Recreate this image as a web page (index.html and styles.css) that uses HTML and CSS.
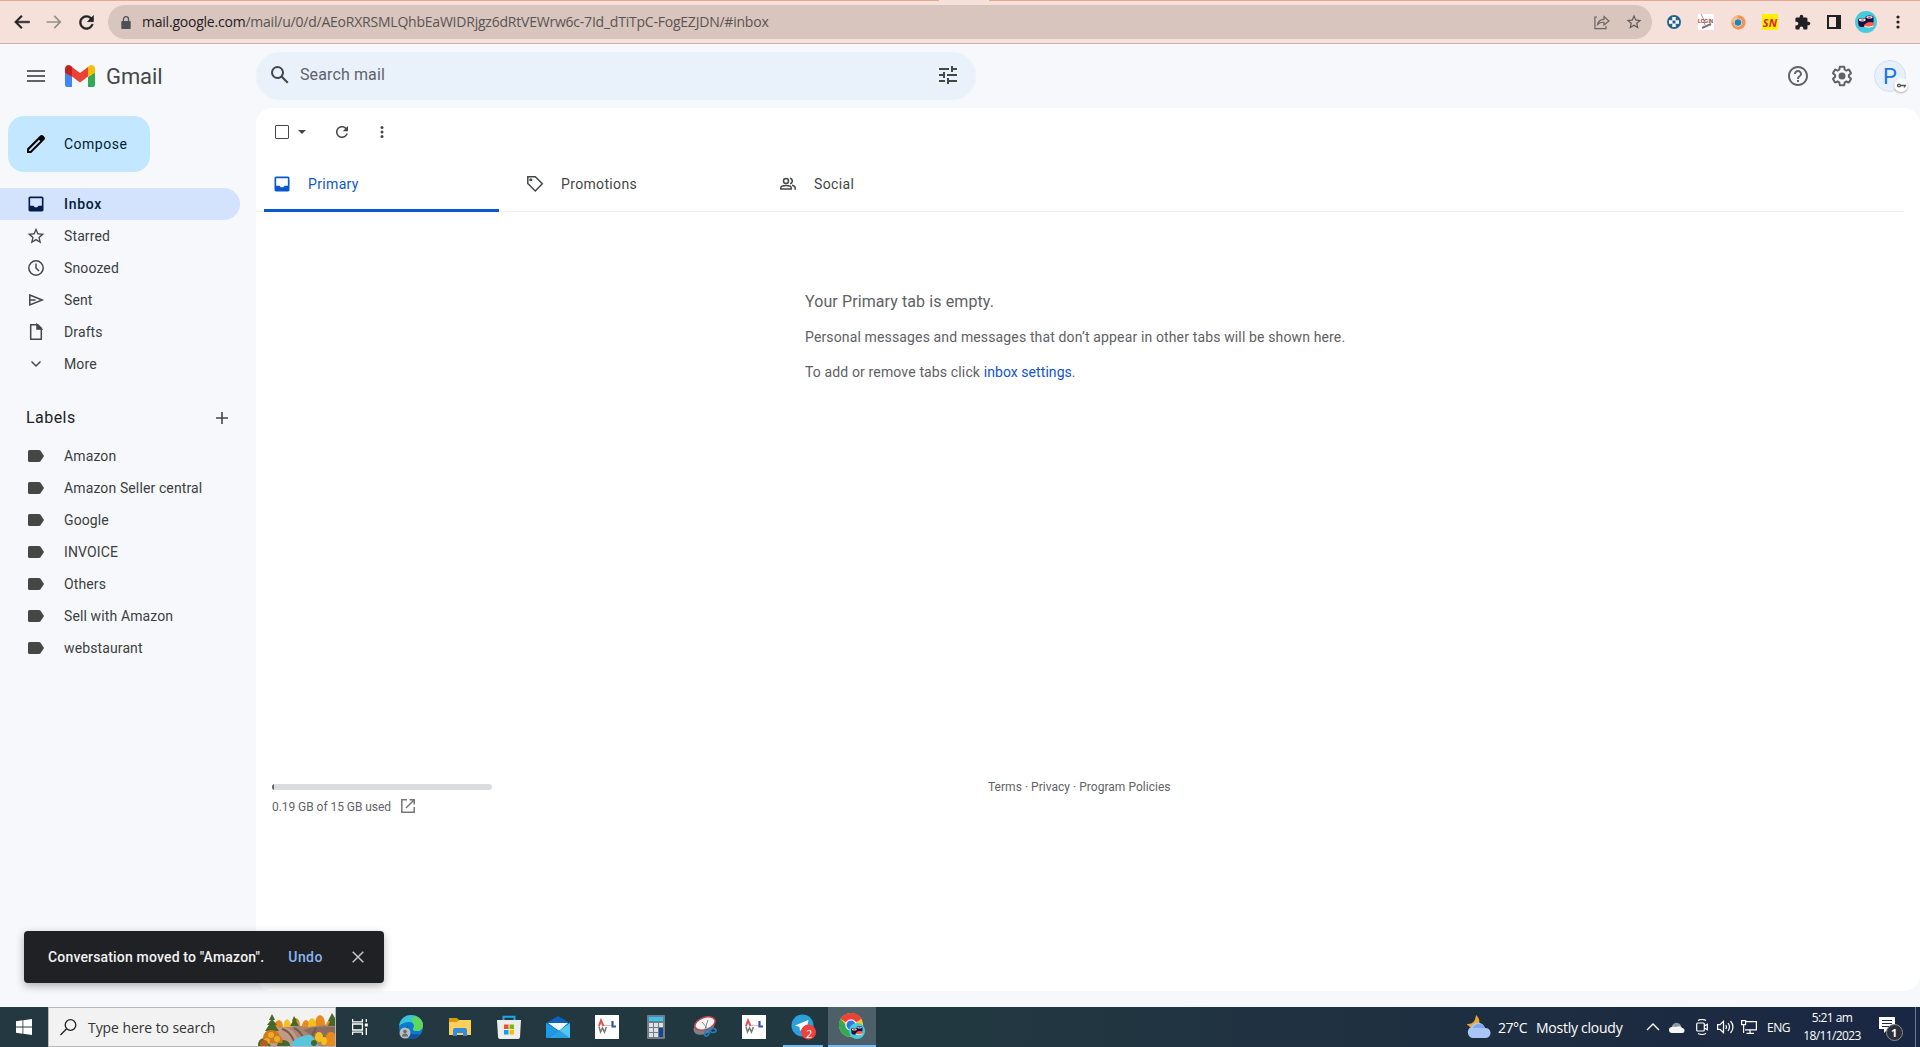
FILE: index.html
```html
<!DOCTYPE html>
<html lang="en">
<head>
  <meta charset="UTF-8">
  <meta name="viewport" content="width=device-width, initial-scale=1.0">
  <title>Inbox - Gmail</title>
  <link rel="stylesheet" href="styles.css">
</head>
<body>
  <!-- shared icons -->
  <svg class="defs">
    <symbol id="label" viewBox="0 0 16 12"><path d="M1.5 0H11Q12 0 12.7 .9L16 6l-3.3 5.100Q12 12 11 12H1.500Q0 12 0 10.500v-9Q0 0 1.500 0z"/></symbol>
    <symbol id="inbox" viewBox="0 0 24 24"><path d="M19 3H5c-1.100 0-2 .9-2 2v14c0 1.100.9 2 2 2h14c1.100 0 2-.9 2-2V5c0-1.100-.9-2-2-2zm0 11h-4l-1.500 2h-3L9 14H5V5h14z"/></symbol>
    <symbol id="star" viewBox="0 0 24 24"><path d="M22 9.240l-7.190-.62L12 2 9.190 8.630 2 9.240l5.460 4.730L5.820 21 12 17.270 18.180 21l-1.630-7.030L22 9.240zM12 15.400l-3.760 2.270 1-4.280-3.320-2.880 4.380-.38L12 6.100l1.710 4.040 4.380.38-3.320 2.880 1 4.280L12 15.400z"/></symbol>
    <symbol id="refresh" viewBox="0 0 24 24"><path d="M17.650 6.350C16.200 4.900 14.210 4 12 4c-4.420 0-7.990 3.580-7.990 8s3.570 8 7.990 8c3.730 0 6.840-2.550 7.730-6h-2.080c-.82 2.330-3.040 4-5.650 4-3.310 0-6-2.690-6-6s2.690-6 6-6c1.660 0 3.140.69 4.220 1.780L13 11h7V4l-2.350 2.350z"/></symbol>
    <symbol id="sushi" viewBox="0 0 22 22">
      <circle cx="11" cy="11" r="11" fill="#46cbdd"/>
      <path d="M3 9q0-2 4.500-2T12 9v4.500Q11 16 7.500 16T3.500 14z" fill="#17123f"/><ellipse cx="7.500" cy="9" rx="3.600" ry="1.400" fill="#fff"/><ellipse cx="7.500" cy="9" rx="1.800" ry=".8" fill="#e6493f"/>
      <path d="M10.500 6.500q0-2 4-2t4 2V11q-1 2-4 2l-4-2z" fill="#17123f"/><ellipse cx="14.500" cy="6.300" rx="3.200" ry="1.200" fill="#e9dff0"/><ellipse cx="14.500" cy="6.300" rx="1.500" ry=".7" fill="#e6493f"/>
      <path d="M9 14q4-4.500 10-2l-.5 3q-5 2-9.500.5z" fill="#ff5b4f"/><path d="M9.500 15.500q4.500 1.500 9-.5" stroke="#fff" fill="none"/>
    </symbol>
    <symbol id="wl" viewBox="0 0 24 24">
      <rect width="24" height="24" fill="#fff"/>
      <path d="M4 11L6 5.500 8.500 11" fill="none" stroke="#e2504f" stroke-width="2"/>
      <path d="M4 11.500l1.500 5.500 2-4 2 4 1.800-5" fill="none" stroke="#777" stroke-width="1.500"/>
      <path d="M9 10.500h8" stroke="#f1b5b5"/><path d="M17.500 6v5.500H21" fill="none" stroke="#2f57a5" stroke-width="2.200"/>
    </symbol>
  </svg>

  <!-- Browser bar -->
  <div class="browser">
    <div class="tab-foot"></div>
    <div class="nav-btn"><svg width="20" height="20" viewBox="0 0 24 24"><path d="M21 11H6.800l5.600-5.600L11 4l-8 8 8 8 1.400-1.400L6.800 13H21z" fill="#1f2023" stroke="#1f2023" stroke-width=".6"/></svg></div>
    <div class="nav-btn"><svg width="20" height="20" viewBox="0 0 24 24"><path d="M3 11h14.200l-5.600-5.600L13 4l8 8-8 8-1.400-1.400 5.600-5.600H3z" fill="#988e8c"/></svg></div>
    <div class="nav-btn"><svg width="21" height="21" viewBox="0 0 24 24" fill="#1f2023" stroke="#1f2023" stroke-width=".6"><use href="#refresh"/></svg></div>
    <div class="url">
      <svg width="10" height="13" viewBox="0 0 10 13"><path d="M1 5h8q.7 0 .7.700v6.500q0 .7-.7.700H1q-.7 0-.7-.7V5.700Q.3 5 1 5z" fill="#4d5156"/><path d="M2.500 5.500V3.200a2.500 2.500 0 0 1 5 0v2.300" fill="none" stroke="#4d5156" stroke-width="1.300"/></svg>
      <span class="url-text"><b>mail.google.com</b>/mail/u/0/d/AEoRXRSMLQhbEaWIDRjgz6dRtVEWrw6c-7Id_dTiTpC-FogEZJDN/#inbox</span>
      <svg class="share" width="16" height="16" viewBox="0 0 16 16" fill="none" stroke="#6b6462" stroke-width="1.200"><path d="M3 3H.9v11.600H12V12"/><path d="M3.500 10.500Q4.500 5.500 10 5.300V2.500L15 7l-5 4V8.300Q6 8 3.500 10.500z"/></svg>
      <svg width="18" height="18" fill="#5f5957"><use href="#star"/></svg>
    </div>
    <div class="exts">
      <span><svg width="14" height="14" viewBox="0 0 14 14"><circle cx="7" cy="7" r="7" fill="#24628f"/><path d="M5.300 2h3.400v3.300H12v3.400H8.700V12H5.300V8.700H2V5.300h3.300z" fill="#fff"/><rect x="5.500" y="5.500" width="3" height="3" fill="#24628f"/></svg></span>
      <span class="login"><i>LOG IN</i><svg width="16" height="16" viewBox="0 0 16 16" stroke="#999"><path d="M3 0l3 6M6 8l1 3" /><path d="M4 14l9-4" stroke="#777" stroke-width="2"/></svg></span>
      <span><svg width="15" height="15" viewBox="0 0 15 15"><circle cx="7.500" cy="7.500" r="7.200" fill="#f0945a"/><path d="M7.500 .3A7.200 7.200 0 0 0 .3 7.500h4z" fill="#f8bd84"/><circle cx="7" cy="7.500" r="4" fill="#fbe0c0"/><circle cx="7" cy="7.500" r="3.300" fill="#1787c5"/></svg></span>
      <span class="sn">SN</span>
      <span><svg width="17" height="17" viewBox="0 0 24 24" fill="#1f2023"><path d="M20.500 11H19V7c0-1.100-.9-2-2-2h-4V3.500a2.500 2.500 0 0 0-5 0V5H4c-1.100 0-1.990.9-1.990 2v3.800H3.500c1.490 0 2.700 1.210 2.700 2.700s-1.210 2.700-2.700 2.700H2V20c0 1.100.9 2 2 2h3.800v-1.500c0-1.490 1.210-2.700 2.700-2.700s2.700 1.210 2.700 2.700V22H17c1.100 0 2-.9 2-2v-4h1.500a2.500 2.500 0 0 0 0-5z"/></svg></span>
      <span><svg width="14" height="14" viewBox="0 0 14 14"><path d="M0 0h14v14H0z" fill="#1f2023"/><path d="M2 2h7v10H2z" fill="#f5e0da"/></svg></span>
      <span><svg width="22" height="22"><use href="#sushi"/></svg></span>
      <span><svg width="4" height="14" viewBox="0 0 4 14" fill="#1f2023"><circle cx="2" cy="2" r="1.600"/><circle cx="2" cy="7" r="1.600"/><circle cx="2" cy="12" r="1.600"/></svg></span>
    </div>
  </div>

  <!-- Gmail header -->
  <header>
    <div class="brand">
      <svg class="menu" width="18" height="12" viewBox="0 0 18 12" fill="#5f6368"><path d="M0 0h18v2H0zM0 5h18v2H0zM0 10h18v2H0z"/></svg>
      <svg width="30" height="22" viewBox="0 0 30 22"><path d="M0 7l7 5v10H2q-2 0-2-2z" fill="#4285f4"/><path d="M30 7l-7 5v10h5q2 0 2-2z" fill="#34a853"/><path d="M7 2l8 6 8-6v9.500l-8 6-8-6z" fill="#ea4335"/><path d="M23 1.700l1-.8c2.500-1.900 6-.2 6 2.800v4L23 12z" fill="#fbbc04"/><path d="M7 1.700l-1-.8C3.500-1 0 .7 0 3.700v4L7 12z" fill="#c5221f"/></svg>
      <span class="gmail">Gmail</span>
    </div>
    <div class="search">
      <svg width="24" height="24" viewBox="0 0 24 24" fill="#444746"><path d="M20.490 19l-5.730-5.730C15.530 12.200 16 10.910 16 9.500A6.500 6.500 0 1 0 9.500 16c1.410 0 2.700-.47 3.770-1.240L19 20.490 20.490 19zM5 9.500C5 7.010 7.010 5 9.500 5S14 7.010 14 9.500 11.990 14 9.500 14 5 11.990 5 9.500z"/></svg>
      <span>Search mail</span>
      <svg width="24" height="24" viewBox="0 0 24 24" fill="#444746"><path d="M3 17v2h6v-2H3zM3 5v2h10V5H3zm10 16v-2h8v-2h-8v-2h-2v6h2zM7 9v2H3v2h4v2h2V9H7zm14 4v-2H11v2h10zm-6-4h2V7h4V5h-4V3h-2v6z"/></svg>
    </div>
    <div class="account">
      <svg width="24" height="24" viewBox="0 0 24 24" fill="#5f6368"><path d="M11 18h2v-2h-2v2zm1-16C6.480 2 2 6.480 2 12s4.480 10 10 10 10-4.480 10-10S17.520 2 12 2zm0 18c-4.410 0-8-3.590-8-8s3.590-8 8-8 8 3.590 8 8-3.590 8-8 8zm0-14c-2.210 0-4 1.790-4 4h2c0-1.100.9-2 2-2s2 .9 2 2c0 2-3 1.750-3 5h2c0-2.250 3-2.500 3-5 0-2.210-1.790-4-4-4z"/></svg>
      <svg width="24" height="24" viewBox="0 0 24 24" fill="#5f6368"><path d="M13.850 22.250h-3.700c-.74 0-1.360-.54-1.450-1.270l-.27-1.890c-.27-.14-.53-.29-.79-.46l-1.800.72c-.7.26-1.470-.03-1.810-.65L2.200 15.530c-.35-.66-.2-1.440.36-1.880l1.530-1.190c-.01-.15-.02-.3-.02-.46 0-.15.01-.31.02-.46l-1.520-1.190c-.59-.45-.74-1.260-.37-1.880l1.850-3.190c.34-.62 1.110-.9 1.790-.63l1.810.73c.26-.17.52-.32.78-.46l.27-1.910c.09-.7.710-1.250 1.440-1.250h3.700c.74 0 1.360.54 1.450 1.270l.27 1.890c.27.14.53.29.79.46l1.800-.72c.71-.26 1.480.03 1.820.65l1.840 3.180c.36.66.2 1.440-.36 1.880l-1.520 1.190c.01.15.02.3.02.46s-.01.310-.02.460l1.520 1.190c.56.450.720 1.230.37 1.860l-1.860 3.220c-.34.62-1.110.9-1.800.63l-1.800-.72c-.26.17-.52.32-.78.46l-.27 1.910c-.1.680-.72 1.220-1.460 1.220zm-3.230-2h2.760l.37-2.550.53-.22c.44-.18.88-.44 1.340-.78l.45-.34 2.380.96 1.380-2.400-2.030-1.580.07-.56c.03-.26.06-.51.06-.78s-.03-.53-.06-.78l-.07-.56 2.030-1.580-1.390-2.400-2.390.96-.45-.35c-.42-.32-.87-.58-1.330-.77l-.52-.22-.37-2.550h-2.760l-.37 2.550-.53.210c-.44.190-.88.440-1.340.79l-.45.330-2.380-.95-1.390 2.390 2.030 1.580-.07.560a7 7 0 0 0-.06.790c0 .26.020.530.060.780l.07.560-2.030 1.580 1.380 2.400 2.390-.96.450.350c.43.330.860.580 1.330.770l.53.220z"/><circle cx="12" cy="12" r="3.500"/></svg>
      <div class="avatar">P<span class="key"><svg width="9" height="5" viewBox="0 0 9 5" fill="none" stroke="#4d5156" stroke-width="1.300"><circle cx="2" cy="2.500" r="1.400"/><path d="M3.500 2.500H9M7.500 2.500v2"/></svg></span></div>
    </div>
  </header>

  <div class="main">
    <!-- Sidebar -->
    <aside>
      <div class="compose"><svg width="24" height="24" viewBox="0 0 24 24"><path d="M20.410 4.940l-1.350-1.350c-.78-.78-2.050-.78-2.830 0L3 16.820V21h4.180L20.410 7.770c.79-.78.790-2.050 0-2.830zM6.350 19H5v-1.350l10-10L16.350 9z" fill="#000"/></svg>Compose</div>
      <div class="item active"><svg width="20" height="20" viewBox="0 0 20 20"><use href="#inbox" width="20" height="20"/></svg>Inbox</div>
      <div class="item"><svg width="20" height="20" viewBox="0 0 24 24"><use href="#star" width="24" height="24"/></svg>Starred</div>
      <div class="item"><svg width="16" height="16" viewBox="0 0 16 16" class="line"><circle cx="8" cy="8" r="7.200"/><path d="M8 3.500V8l3 3"/></svg>Snoozed</div>
      <div class="item"><svg width="20" height="20" viewBox="0 0 20 20" class="line"><path d="M3.800 5l12.400 5-12.400 5zM4 10h5.500"/></svg>Sent</div>
      <div class="item"><svg width="20" height="20" viewBox="0 0 20 20" class="line"><path d="M4.700 2.700h7l3.600 3.600v10.900H4.700z"/><path d="M11 2.500V7h4.500z" fill="#444746"/></svg>Drafts</div>
      <div class="item"><svg width="20" height="20" viewBox="0 0 20 20" class="line"><path d="M5.500 7.500L10 12l4.500-4.500"/></svg>More</div>
      <div class="labels-head">Labels<svg width="12" height="12" viewBox="0 0 12 12"><path d="M6 0v12M0 6h12" stroke="#444746" stroke-width="1.600"/></svg></div>
      <div class="item"><svg width="16" height="12"><use href="#label"/></svg>Amazon</div>
      <div class="item"><svg width="16" height="12"><use href="#label"/></svg>Amazon Seller central</div>
      <div class="item"><svg width="16" height="12"><use href="#label"/></svg>Google</div>
      <div class="item"><svg width="16" height="12"><use href="#label"/></svg>INVOICE</div>
      <div class="item"><svg width="16" height="12"><use href="#label"/></svg>Others</div>
      <div class="item"><svg width="16" height="12"><use href="#label"/></svg>Sell with Amazon</div>
      <div class="item"><svg width="16" height="12"><use href="#label"/></svg>webstaurant</div>
    </aside>

    <!-- Mail panel -->
    <section class="panel">
      <div class="toolbar">
        <span class="box"></span>
        <svg class="caret" width="8" height="4" viewBox="0 0 8 4"><path d="M0 0h8L4 4z"/></svg>
        <svg class="reload" width="18" height="18"><use href="#refresh"/></svg>
        <svg width="4" height="12" viewBox="0 0 4 12"><circle cx="2" cy="1.600" r="1.500"/><circle cx="2" cy="6" r="1.500"/><circle cx="2" cy="10.400" r="1.500"/></svg>
      </div>
      <div class="tabs">
        <div class="tab selected"><svg width="20" height="20"><use href="#inbox" width="20" height="20"/></svg>Primary</div>
        <div class="tab"><svg width="20" height="20" viewBox="0 0 20 20" class="line"><path d="M2.800 2.700h7.500l7 7-7 7.300-7.500-7.500z"/><circle cx="5.800" cy="5.800" r=".8"/></svg>Promotions</div>
        <div class="tab"><svg width="20" height="20" viewBox="0 0 20 20" class="line"><circle cx="8" cy="7" r="2.500"/><path d="M2.800 15v-1.200q0-2.300 5.200-2.300t5.200 2.300V15zM12 4.300q2.300.5 2.300 2.700T12 9.700M14 11.300q3.200.7 3.200 2.700v1.700"/></svg>Social</div>
      </div>
      <div class="empty">
        <h3>Your Primary tab is empty.</h3>
        <p>Personal messages and messages that don’t appear in other tabs will be shown here.</p>
        <p>To add or remove tabs click <a>inbox settings</a>.</p>
      </div>
      <footer>
        <div class="storage">
          <div class="meter"><div style="width: 1%"></div></div>
          <div class="used">0.19 GB of 15 GB used<svg width="14" height="14" viewBox="0 0 14 14" fill="none" stroke="#747775" stroke-width="1.500"><path d="M6 .8H.8v12.400h12.400V8M8.500 .8h4.700v4.700M13 1L5 9"/></svg></div>
        </div>
        <div class="terms">Terms · Privacy · Program Policies</div>
      </footer>
    </section>
  </div>

  <!-- Toast -->
  <div class="toast"><span>Conversation moved to "Amazon".</span><b>Undo</b><svg width="12" height="12" viewBox="0 0 12 12"><path d="M.7.700l10.600 10.600M11.300.700L.7 11.300" stroke="#c4c7c5" stroke-width="1.500"/></svg></div>

  <!-- Taskbar -->
  <div class="taskbar">
    <div class="start"><svg width="16" height="16" viewBox="0 0 16 16" fill="#fff"><path d="M0 2.200l6.500-.9v6.300H0zM7.300 1.200L16 0v7.600H7.300zM0 8.400h6.500v6.300L0 13.800zM7.300 8.400H16V16l-8.700-1.200z"/></svg></div>
    <div class="find">
      <svg width="17" height="17" viewBox="0 0 17 17" fill="none" stroke="#222" stroke-width="1.300"><circle cx="10.500" cy="6" r="5.300"/><path d="M6.600 9.800L.5 16"/></svg>
      <span>Type here to search</span>
      <svg class="scene" width="77" height="33" viewBox="0 0 77 33">
        <path d="M20 14l57-3v22H10z" fill="#a98672"/><path d="M14 17q14-7 22 2l8 14H10z" fill="#c09a86"/><path d="M45 17q14-5 32-3v10H56z" fill="#8b6d5e"/><path d="M24 16q8 2 12 12M36 15q6 3 9 9M58 15l-4 8" stroke="#7a5a4a" stroke-width="2" fill="none"/>
        <path d="M33 33q0-5 7-8 5-3 13-3l8 11z" fill="#58c6df"/>
        <g fill="#e98b1c"><path d="M17 15q-1-7 4-8 4 1 4 7zM34 13q-1-7 4-8 4 1 4 8zM44 14q0-6 4-7 4 1 4 7zM57 13q0-10 5-11 5 1 5 10zM68 13q0-5 4-6 4 1 4 6z"/><circle cx="73" cy="24" r="5"/><path d="M68 25h9v8h-9z"/></g>
        <g fill="#f3c01f"><path d="M26 14q-1-6 3-8 4 2 4 8zM50 14q0-8 4-9 4 1 4 8z"/><ellipse cx="61" cy="24" rx="4" ry="5"/><ellipse cx="66" cy="28" rx="3" ry="4"/></g>
        <g fill="#47682b"><path d="M14 1l3 6-2 0 4 5h-2l4 6H7l4-6H9l4-5h-2zM74 0l3 5v8h-7l2-5h-2zM36 3l3 5-1 0 3 5h-9l3-5h-1z"/><path d="M0 33q0-8 7-8l6 8zM19 33q1-7 7-6t6 6z"/><circle cx="56" cy="30" r="3"/></g>
        <path d="M5 25q1-8 8-8 7 0 9 6 4 3 2 7H6z" fill="#d27a17"/><g fill="#e8ac2d"><circle cx="13" cy="22" r="3"/><circle cx="9" cy="28" r="3"/><circle cx="19" cy="26" r="3"/></g><circle cx="6" cy="31" r="4" fill="#b3601b"/>
      </svg>
    </div>
    <div class="app taskview"><svg width="16" height="16" viewBox="0 0 16 16" fill="none" stroke="#fff" stroke-width="1.300"><path d="M.6 0v2.800h9.800V0M.6 16v-2.800h9.800V16M.6 5h9.800v6H.6zM14.300 0v3M14.300 9v7"/><path d="M12.800 4.500h3v3h-3z" fill="#fff" stroke="none"/></svg></div>
    <div class="app"><svg width="24" height="24" viewBox="0 0 24 24"><circle cx="12" cy="12" r="12" fill="#0b7bd0"/><path d="M0 11C1 4 6 0 12 0c7 0 12 5 12 10 0 4-3 6-6 6-3 0-4-1-4-2 0-1 1-1 1-3 0-2-2-4-5-4-5 0-9 3-10 4z" fill="#35c4d8"/><path d="M16 1c5 2 8 5 8 9 0 4-3 6-6 6-3 0-4-1-4-2 0-1 1-1 1-3 0-3-1-5-3-6z" fill="#62d85b"/><path d="M9 10c-2 6 3 11 12 9-3 4-7 5-10 5-5-2-6-10-2-14z" fill="#124f9d"/><circle cx="6" cy="18" r="5.500" fill="#b8bdc1"/><circle cx="6" cy="16.500" r="1.800" fill="#666c72"/><path d="M3 21.500q0-3 3-3t3 3z" fill="#666c72"/></svg></div>
    <div class="app"><svg width="22" height="18" viewBox="0 0 22 18"><path d="M0 0h8l2 2v4H0z" fill="#d99a0b"/><path d="M0 4h8l2-2h12v15H0z" fill="#fdd05b"/><path d="M4 18v-6q0-2 2-2h10q2 0 2 2v6h-4v-3H8v3z" fill="#348bdd"/></svg></div>
    <div class="app"><svg width="24" height="24" viewBox="0 0 24 24"><path d="M6.500 6V1.700h11V6" fill="none" stroke="#21a8e3" stroke-width="2"/><path d="M0 5h24l-1 17q0 2-2 2H3q-2 0-2-2z" fill="#ededed"/><path d="M7 9.500h4.500V14H7z" fill="#f25022"/><path d="M12.500 9.500H17V14h-4.500z" fill="#7fba00"/><path d="M7 15h4.500v4.500H7z" fill="#00a4ef"/><path d="M12.500 15H17v4.500h-4.500z" fill="#ffb900"/></svg></div>
    <div class="app"><svg width="24" height="22" viewBox="0 0 24 22"><path d="M0 7L12 0l12 7v6H0z" fill="#0b62b8"/><path d="M2 7h20l-9 8z" fill="#f2f6fa"/><path d="M0 7l24 15H0z" fill="#1c9be6"/><path d="M24 7v15H3z" fill="#50c8f2"/><path d="M0 22h24L13 14z" fill="#1b8fdc" opacity=".7"/></svg></div>
    <div class="app"><svg width="24" height="24"><use href="#wl"/></svg></div>
    <div class="app"><svg width="18" height="24" viewBox="0 0 18 24"><rect width="18" height="24" rx="1" fill="#717d88"/><path d="M2 2h14v4H2z" fill="#35c5f0"/><path d="M2 8h4v4H2zM7 8h4v4H7zM12 8h4v4h-4zM2 13h4v4H2zM7 13h4v4H7zM2 18h4v4H2zM7 18h4v4H7z" fill="#dfe3e8"/><path d="M12 13h4v9h-4z" fill="#15478d"/></svg></div>
    <div class="app"><svg width="24" height="22" viewBox="0 0 24 22"><ellipse cx="11" cy="11" rx="11" ry="7" fill="#7d8288" transform="rotate(-25 11 11)"/><ellipse cx="12" cy="7.500" rx="10.500" ry="6" fill="#f5f5f5" stroke="#c2474b" stroke-width="1.500" transform="rotate(-20 12 7.500)"/><path d="M9 6l6 7M15 4l-3 9" stroke="#888"/><g fill="none" stroke="#1d80c3" stroke-width="1.600"><ellipse cx="14" cy="17" rx="2" ry="3.300" transform="rotate(25 14 17)"/><ellipse cx="20" cy="14.500" rx="3" ry="2"/></g></svg></div>
    <div class="app"><svg width="24" height="24"><use href="#wl"/></svg></div>
    <div class="app telegram"><svg width="26" height="26" viewBox="0 0 26 26"><circle cx="11.500" cy="11.500" r="11" fill="#2ba0da"/><path d="M4 11.500L17.500 6l-2.500 12-4-3-2 2-.5-4z" fill="#fff"/><circle cx="17.500" cy="18" r="7.500" fill="#f0423c"/></svg><i>2</i></div>
    <div class="app open"><svg width="26" height="26" viewBox="0 0 26 26"><circle cx="12" cy="12" r="12" fill="#fcc934"/><path d="M12 12L1.600 6A12 12 0 0 1 22.400 6z" fill="#ea4335"/><path d="M12 12h-5L1.600 6A12 12 0 0 0 11 24l4-7z" fill="#34a853"/><circle cx="12" cy="12" r="5.700" fill="#fff"/><circle cx="12" cy="12" r="4.500" fill="#2f74e0"/><use href="#sushi" x="10" y="10" width="16" height="16"/></svg></div>

    <div class="tray">
      <svg class="weather" width="25" height="24" viewBox="0 0 25 24"><path d="M10 0q5 4 3 12H4Q0 9 1 9q8 1 9-9z" fill="#f0a52c"/><path d="M6 23a6 6 0 0 1-1-11 7.500 7.500 0 0 1 14 1 5 5 0 0 1 1 10z" fill="#a9c5f6"/><path d="M7 13a6.500 6.500 0 0 1 12 0" fill="#7fa6ec"/></svg>
      <span class="temp">27°C</span><span class="sky">Mostly cloudy</span>
      <svg class="up" width="14" height="8" viewBox="0 0 14 8"><path d="M1 7l6-6 6 6" fill="none" stroke="#fff" stroke-width="1.400"/></svg>
      <svg class="cloud" width="16" height="11" viewBox="0 0 16 11"><path d="M3 7a4.500 4.500 0 0 1 9-3l1 3z" fill="#8f979e"/><path d="M3 11a3 3 0 0 1 0-6q2-1 4 0 5-2 6 1a2.500 2.500 0 0 1 0 5z" fill="#f6f6f6"/></svg>
      <svg class="meet" width="12" height="16" viewBox="0 0 12 16" fill="none" stroke="#fff" stroke-width="1.200"><rect x=".7" y="4" width="7.600" height="8" rx="1"/><path d="M8.300 7l3-1.800v5.600l-3-1.800M2 1.500Q6-.5 10 1.500M2 14.500q4 2 8 0"/></svg>
      <svg class="sound" width="17" height="14" viewBox="0 0 17 14" fill="none" stroke="#fff" stroke-width="1.200"><path d="M.6 4.700H3l3.500-3.400v11.400L3 9.300H.6zM8.700 5q1.500 2 0 4M11 3q3 4 0 8M13.500 1q5 6 0 12"/></svg>
      <svg class="net" width="16" height="14" viewBox="0 0 16 14" fill="none" stroke="#fff" stroke-width="1.200"><path d="M5 1.600h10.400v8.200H4M9 10v3M5.500 13.300H13M.6.600h4v4h-4zM2.600 4.600v8.500"/></svg>
      <span class="eng">ENG</span>
      <div class="clock"><span>5:21 am</span><span class="date">18/11/2023</span></div>
      <div class="notes"><svg width="26" height="26" viewBox="0 0 26 26"><path d="M0 1h16v12H9l-4 4v-4H0z" fill="#fff"/><path d="M3 4.500h10M3 7.500h10M3 10.500h7" stroke="#1d2a42"/><circle cx="15.500" cy="16.500" r="8" fill="#2b2f38" stroke="#8a8f98"/></svg><i>1</i></div>
    </div>
  </div>
</body>
</html>
```
FILE: styles.css
```css
* {
  box-sizing: border-box;
}

body {
  margin: 0;
  height: 1047px;
  display: flex;
  flex-direction: column;
  overflow: hidden;
  background: #f6f8fc;
  color: #444746;
  font-family: Roboto, sans-serif;
  font-size: 14px;
  letter-spacing: 0.12px;
}

svg {
  flex: none;
  display: block;
}

.defs {
  position: absolute;
  width: 0;
  height: 0;
}

.line {
  fill: none;
  stroke: #444746;
  stroke-width: 1.5;
}

/* browser bar */
.browser {
  position: relative;
  display: flex;
  align-items: center;
  height: 44px;
  flex: none;
  padding: 0 6px;
  background: #f5e0da;
  border-top: 1px solid #e6a797;
  border-bottom: 1px solid #c8b3ae;
}

.tab-foot {
  position: absolute;
  left: 939px;
  top: -1px;
  width: 50px;
  height: 1px;
  background: #f5e0da;
}

.nav-btn {
  width: 32px;
  display: flex;
  justify-content: center;
}

.url {
  display: flex;
  align-items: center;
  width: 1544px;
  height: 34px;
  margin-left: 6px;
  padding: 0 9px 0 13px;
  border-radius: 17px;
  background: #d7c5be;
}

.url-text {
  flex: 1;
  margin-left: 11px;
  padding-bottom: 1px;
  color: #5b5453;
  font-family: "Open Sans", sans-serif;
  font-size: 14px;
  letter-spacing: -0.22px;
}

.url-text b {
  color: #1f2023;
  font-weight: 400;
}

.share {
  margin-right: 15px;
}

.exts {
  display: flex;
  margin-left: 6px;
}

.exts span {
  display: flex;
  align-items: center;
  justify-content: center;
  width: 32px;
  height: 24px;
}

.exts .login {
  position: relative;
  width: 16px;
  height: 16px;
  margin: 4px 8px;
  background: #fff;
}

.login i {
  position: absolute;
  left: 0;
  top: 4px;
  font: bold 5px/6px "Liberation Sans", sans-serif;
  letter-spacing: -0.4px;
  color: #9c3a3a;
  white-space: nowrap;
}

.exts .sn {
  width: 16px;
  height: 16px;
  margin: 4px 8px;
  background: #fff000;
  color: #e01b22;
  font: italic bold 11px "Open Sans", sans-serif;
}

/* header */
header {
  display: flex;
  align-items: center;
  height: 64px;
  flex: none;
}

.brand {
  display: flex;
  align-items: center;
  width: 256px;
  padding-left: 27px;
}

.menu {
  margin-right: 20px;
}

.gmail {
  margin-left: 11px;
  font-size: 22px;
  letter-spacing: -0.1px;
}

.search {
  display: flex;
  align-items: center;
  width: 720px;
  height: 48px;
  padding: 0 16px 3px 12px;
  border-radius: 24px;
  background: #e9f1fb;
  color: #5f6368;
  font-size: 16px;
}

.search span {
  flex: 1;
  margin-left: 8px;
  line-height: 20px;
}

.account {
  display: flex;
  align-items: center;
  gap: 20px;
  margin-left: auto;
  padding-right: 14px;
}

.avatar {
  position: relative;
  width: 32px;
  height: 32px;
  border: 1px solid #d3dff3;
  border-radius: 50%;
  background: #e8f0fe;
  color: #1a73e8;
  font-size: 22px;
  line-height: 31px;
  text-align: center;
}

.key {
  position: absolute;
  right: -3px;
  bottom: -1px;
  display: flex;
  align-items: center;
  justify-content: center;
  width: 14px;
  height: 14px;
  border-radius: 50%;
  background: #fff;
  box-shadow: 0 1px 2px rgba(0, 0, 0, 0.3);
}

/* main */
.main {
  display: flex;
  flex: 1;
  padding-bottom: 16px;
}

aside {
  width: 256px;
  padding-top: 8px;
}

.compose {
  display: flex;
  align-items: center;
  gap: 16px;
  width: 142px;
  height: 56px;
  margin: 0 0 16px 8px;
  padding-left: 16px;
  border-radius: 16px;
  background: #c2e7ff;
  color: #001d35;
  letter-spacing: 0.5px;
}

.item {
  display: flex;
  align-items: center;
  width: 240px;
  height: 32px;
  color: #3c3f41;
}

.item svg {
  width: 72px;
  margin-right: -8px;
  fill: #444746;
}

.item svg.line {
  fill: none;
}

.item.active {
  border-radius: 0 16px 16px 0;
  background: #d3e3fd;
  color: #001d35;
  font-weight: 500;
  letter-spacing: 0.7px;
}

.item.active svg {
  fill: #041e49;
}

.labels-head {
  display: flex;
  align-items: center;
  justify-content: space-between;
  height: 20px;
  margin: 27px 28px 13px 26px;
  padding-top: 1px;
  color: #202124;
  font-size: 16px;
  letter-spacing: 0.45px;
}

.panel {
  display: flex;
  flex-direction: column;
  flex: 1;
  border-radius: 16px;
  background: #fff;
}

.toolbar {
  display: flex;
  align-items: center;
  height: 48px;
  padding-left: 19px;
  fill: #444746;
}

.box {
  width: 14px;
  height: 14px;
  border: 1.5px solid #444746;
  border-radius: 1px;
}

.caret {
  margin: 0 27px 0 9px;
}

.reload {
  margin-right: 29px;
}

.tabs {
  display: flex;
  height: 56px;
  margin-right: 16px;
  padding-left: 8px;
  border-bottom: 1px solid #eceeef;
}

.tab {
  display: flex;
  align-items: center;
  gap: 16px;
  width: 235px;
  height: 56px;
  margin-right: 18px;
  padding-left: 8px;
  letter-spacing: 0.35px;
}

.tab.selected {
  border-bottom: 3px solid #0b57d0;
  padding-top: 3px;
  color: #0b57d0;
  fill: #0b57d0;
}

.empty {
  width: 560px;
  margin: 78px 0 0 549px;
  color: #5e6165;
  letter-spacing: 0.14px;
}

.empty h3 {
  margin: 0 0 13px;
  font-size: 16px;
  font-weight: 400;
  line-height: 24px;
  letter-spacing: 0.1px;
}

.empty p {
  margin: 0 0 15px;
  line-height: 20px;
}

.empty a {
  color: #1155cc;
  letter-spacing: 0.06px;
}

footer {
  display: flex;
  margin-top: auto;
  height: 208px;
  color: #5f6368;
  font-size: 12px;
  letter-spacing: 0.03px;
}

.storage {
  width: 732px;
  padding-left: 16px;
}

.meter {
  width: 220px;
  height: 6px;
  margin-top: 1px;
  border-radius: 4px;
  overflow: hidden;
  background: #dadce0;
}

.meter div {
  height: 6px;
  background: #5f6368;
}

.used {
  display: flex;
  align-items: center;
  height: 16px;
  margin-top: 9px;
  letter-spacing: -0.05px;
}

.used svg {
  margin: -2px 0 0 10px;
}

.terms {
  line-height: 8px;
}

/* toast */
.toast {
  position: absolute;
  left: 24px;
  top: 931px;
  display: flex;
  align-items: center;
  width: 360px;
  height: 52px;
  padding-left: 24px;
  border-radius: 4px;
  background: #202124;
  color: #f2f2f2;
  box-shadow: 0 3px 8px rgba(0, 0, 0, 0.3);
  font-weight: 500;
  letter-spacing: 0.17px;
}

.toast b {
  margin: 0 29px 0 24px;
  color: #8ab4f8;
  font-weight: 500;
  letter-spacing: 0.45px;
}

/* taskbar */
.taskbar {
  display: flex;
  align-items: center;
  height: 40px;
  flex: none;
  background: linear-gradient(90deg, #233840, #223841 50%, #1d2b41 85%, #1a2744);
  color: #fff;
  font-family: "Open Sans", sans-serif;
}

.start {
  display: flex;
  justify-content: center;
  width: 48px;
}

.find {
  display: flex;
  align-items: center;
  width: 288px;
  height: 40px;
  padding-left: 11px;
  border: 1px solid #b7b7b7;
  background: #f2f2f2;
  color: #333;
  letter-spacing: -0.08px;
}

.find span {
  margin-left: 11px;
}

.scene {
  margin: 5px 0 0 auto;
}

.app {
  position: relative;
  display: flex;
  align-items: center;
  justify-content: center;
  width: 48px;
  height: 40px;
  margin-right: 1px;
}

.taskview {
  margin-right: 3px;
}

.app.open {
  background: #4d5f68;
  border-bottom: 2px solid #76b9ed;
}

.telegram {
  padding-left: 2px;
}

.telegram i {
  position: absolute;
  left: 27px;
  top: 19px;
  font: 11px/16px "Open Sans", sans-serif;
}

.telegram::after {
  content: "";
  position: absolute;
  left: 4px;
  bottom: 0;
  width: 40px;
  height: 2px;
  background: #76b9ed;
}

.tray {
  display: flex;
  align-items: center;
  height: 40px;
  margin-left: auto;
  margin-right: 4px;
  border-right: 1px solid #6f7a8a;
}

.temp {
  margin-left: 7px;
  width: 38px;
  letter-spacing: -0.45px;
}

.sky {
  width: 110px;
  letter-spacing: -0.25px;
}

.cloud {
  margin-left: 9px;
}

.meet {
  margin-left: 11px;
}

.sound {
  margin-left: 9px;
}

.net {
  margin-left: 7px;
}

.eng {
  margin-left: 10px;
  width: 31px;
  font-size: 12px;
  letter-spacing: -0.5px;
}

.clock {
  display: flex;
  flex-direction: column;
  align-items: center;
  width: 68px;
  font-size: 12px;
  line-height: 18px;
  letter-spacing: -0.6px;
}

.notes {
  position: relative;
  margin: 0 10px 0 13px;
}

.notes svg {
  margin-top: 4px;
}

.notes i {
  position: absolute;
  left: 12px;
  top: 13px;
  font: bold 11px/15px "Open Sans", sans-serif;
}
```
